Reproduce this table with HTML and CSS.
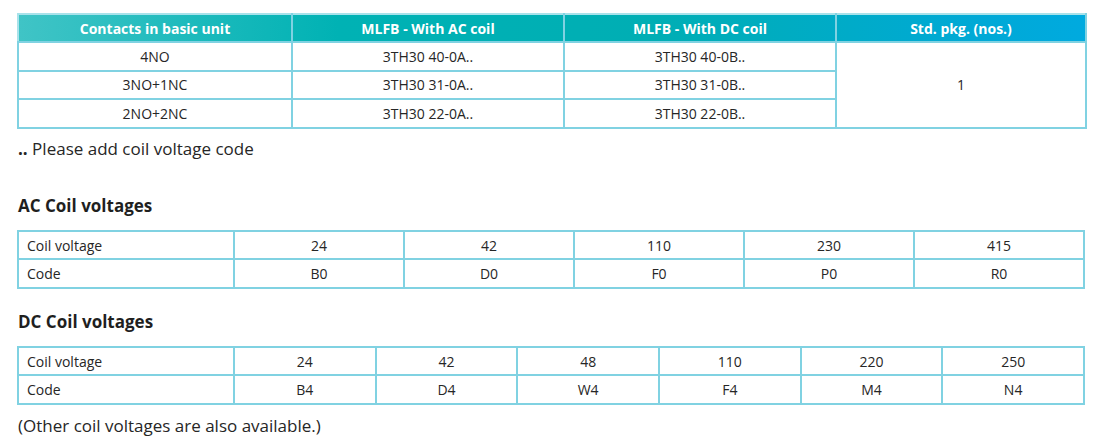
FILE: index.html
```html
<!DOCTYPE html>
<html>
<head>
<meta charset="utf-8">
<link rel="stylesheet" href="styles.css">
</head>
<body>
<div class="page">
  <table class="grid main">
    <colgroup><col class="c1"><col class="c2"><col class="c3"><col class="c4"></colgroup>
    <thead>
      <tr><th>Contacts in basic unit</th><th>MLFB - With AC coil</th><th>MLFB - With DC coil</th><th>Std. pkg. (nos.)</th></tr>
    </thead>
    <tbody>
      <tr><td>4NO</td><td>3TH30 40-0A..</td><td>3TH30 40-0B..</td><td rowspan="3">1</td></tr>
      <tr><td>3NO+1NC</td><td>3TH30 31-0A..</td><td>3TH30 31-0B..</td></tr>
      <tr><td>2NO+2NC</td><td>3TH30 22-0A..</td><td>3TH30 22-0B..</td></tr>
    </tbody>
  </table>
  <p class="note"><b class="dots">..</b> Please add coil voltage code</p>

  <h2 class="title ac-title">AC Coil voltages</h2>
  <table class="grid volt">
    <colgroup><col class="lab"><col><col><col><col><col></colgroup>
    <tr><td class="left">Coil voltage</td><td>24</td><td>42</td><td>110</td><td>230</td><td>415</td></tr>
    <tr><td class="left">Code</td><td>B0</td><td>D0</td><td>F0</td><td>P0</td><td>R0</td></tr>
  </table>

  <h2 class="title dc-title">DC Coil voltages</h2>
  <table class="grid volt">
    <colgroup><col class="lab"><col><col><col><col><col><col></colgroup>
    <tr><td class="left">Coil voltage</td><td>24</td><td>42</td><td>48</td><td>110</td><td>220</td><td>250</td></tr>
    <tr><td class="left">Code</td><td>B4</td><td>D4</td><td>W4</td><td>F4</td><td>M4</td><td>N4</td></tr>
  </table>
  <p class="note foot">(Other coil voltages are also available.)</p>
</div>
</body>
</html>
```
FILE: styles.css
```css
html, body {
  margin: 0;
  padding: 0;
  background: #ffffff;
}
body {
  font-family: "Open Sans", "Noto Sans", sans-serif;
  color: #262626;
}
.page {
  padding: 13px 0 0 17px;
  width: 1068px;
}
.grid {
  border-collapse: collapse;
  width: 1068px;
  table-layout: fixed;
  font-size: 14px;
}
.grid td, .grid th {
  border: 2px solid #80d2e2;
  text-align: center;
  padding: 0;
}
.main th {
  height: 26px;
  color: #ffffff;
  font-weight: 700;
  font-size: 14px;
  border-top-color: #a8e2ea;
}
.main thead tr {
  background: linear-gradient(to right, #40c4c6 0%, #00b2b4 30%, #00aeb4 60%, #00a9d6 90%, #00aadf 100%);
}
.main th:first-child { border-left-color: #a8e2ea; }
.main th + th { border-left-color: #8fd6e2; }
.main td {
  height: 26.6px;
}
.c1 { width: 274px; }
.c2 { width: 272px; }
.c3 { width: 272px; }
.c4 { width: 250px; }
.note {
  margin: 9px 0 0 1px;
  font-size: 17px;
  line-height: 22px;
}
.dots { font-weight: 700; }
.title {
  font-size: 17px;
  font-weight: 700;
  margin: 35px 0 0 1px;
  line-height: 22px;
  color: #1f1f1f;
}
.volt { margin-top: 13px; }
.volt td { height: 26.5px; }
.volt .lab { width: 216px; }
.volt td.left {
  text-align: left;
  padding-left: 8px;
}
.dc-title { margin-top: 22px; }
.foot { margin-top: 10px; }
```
